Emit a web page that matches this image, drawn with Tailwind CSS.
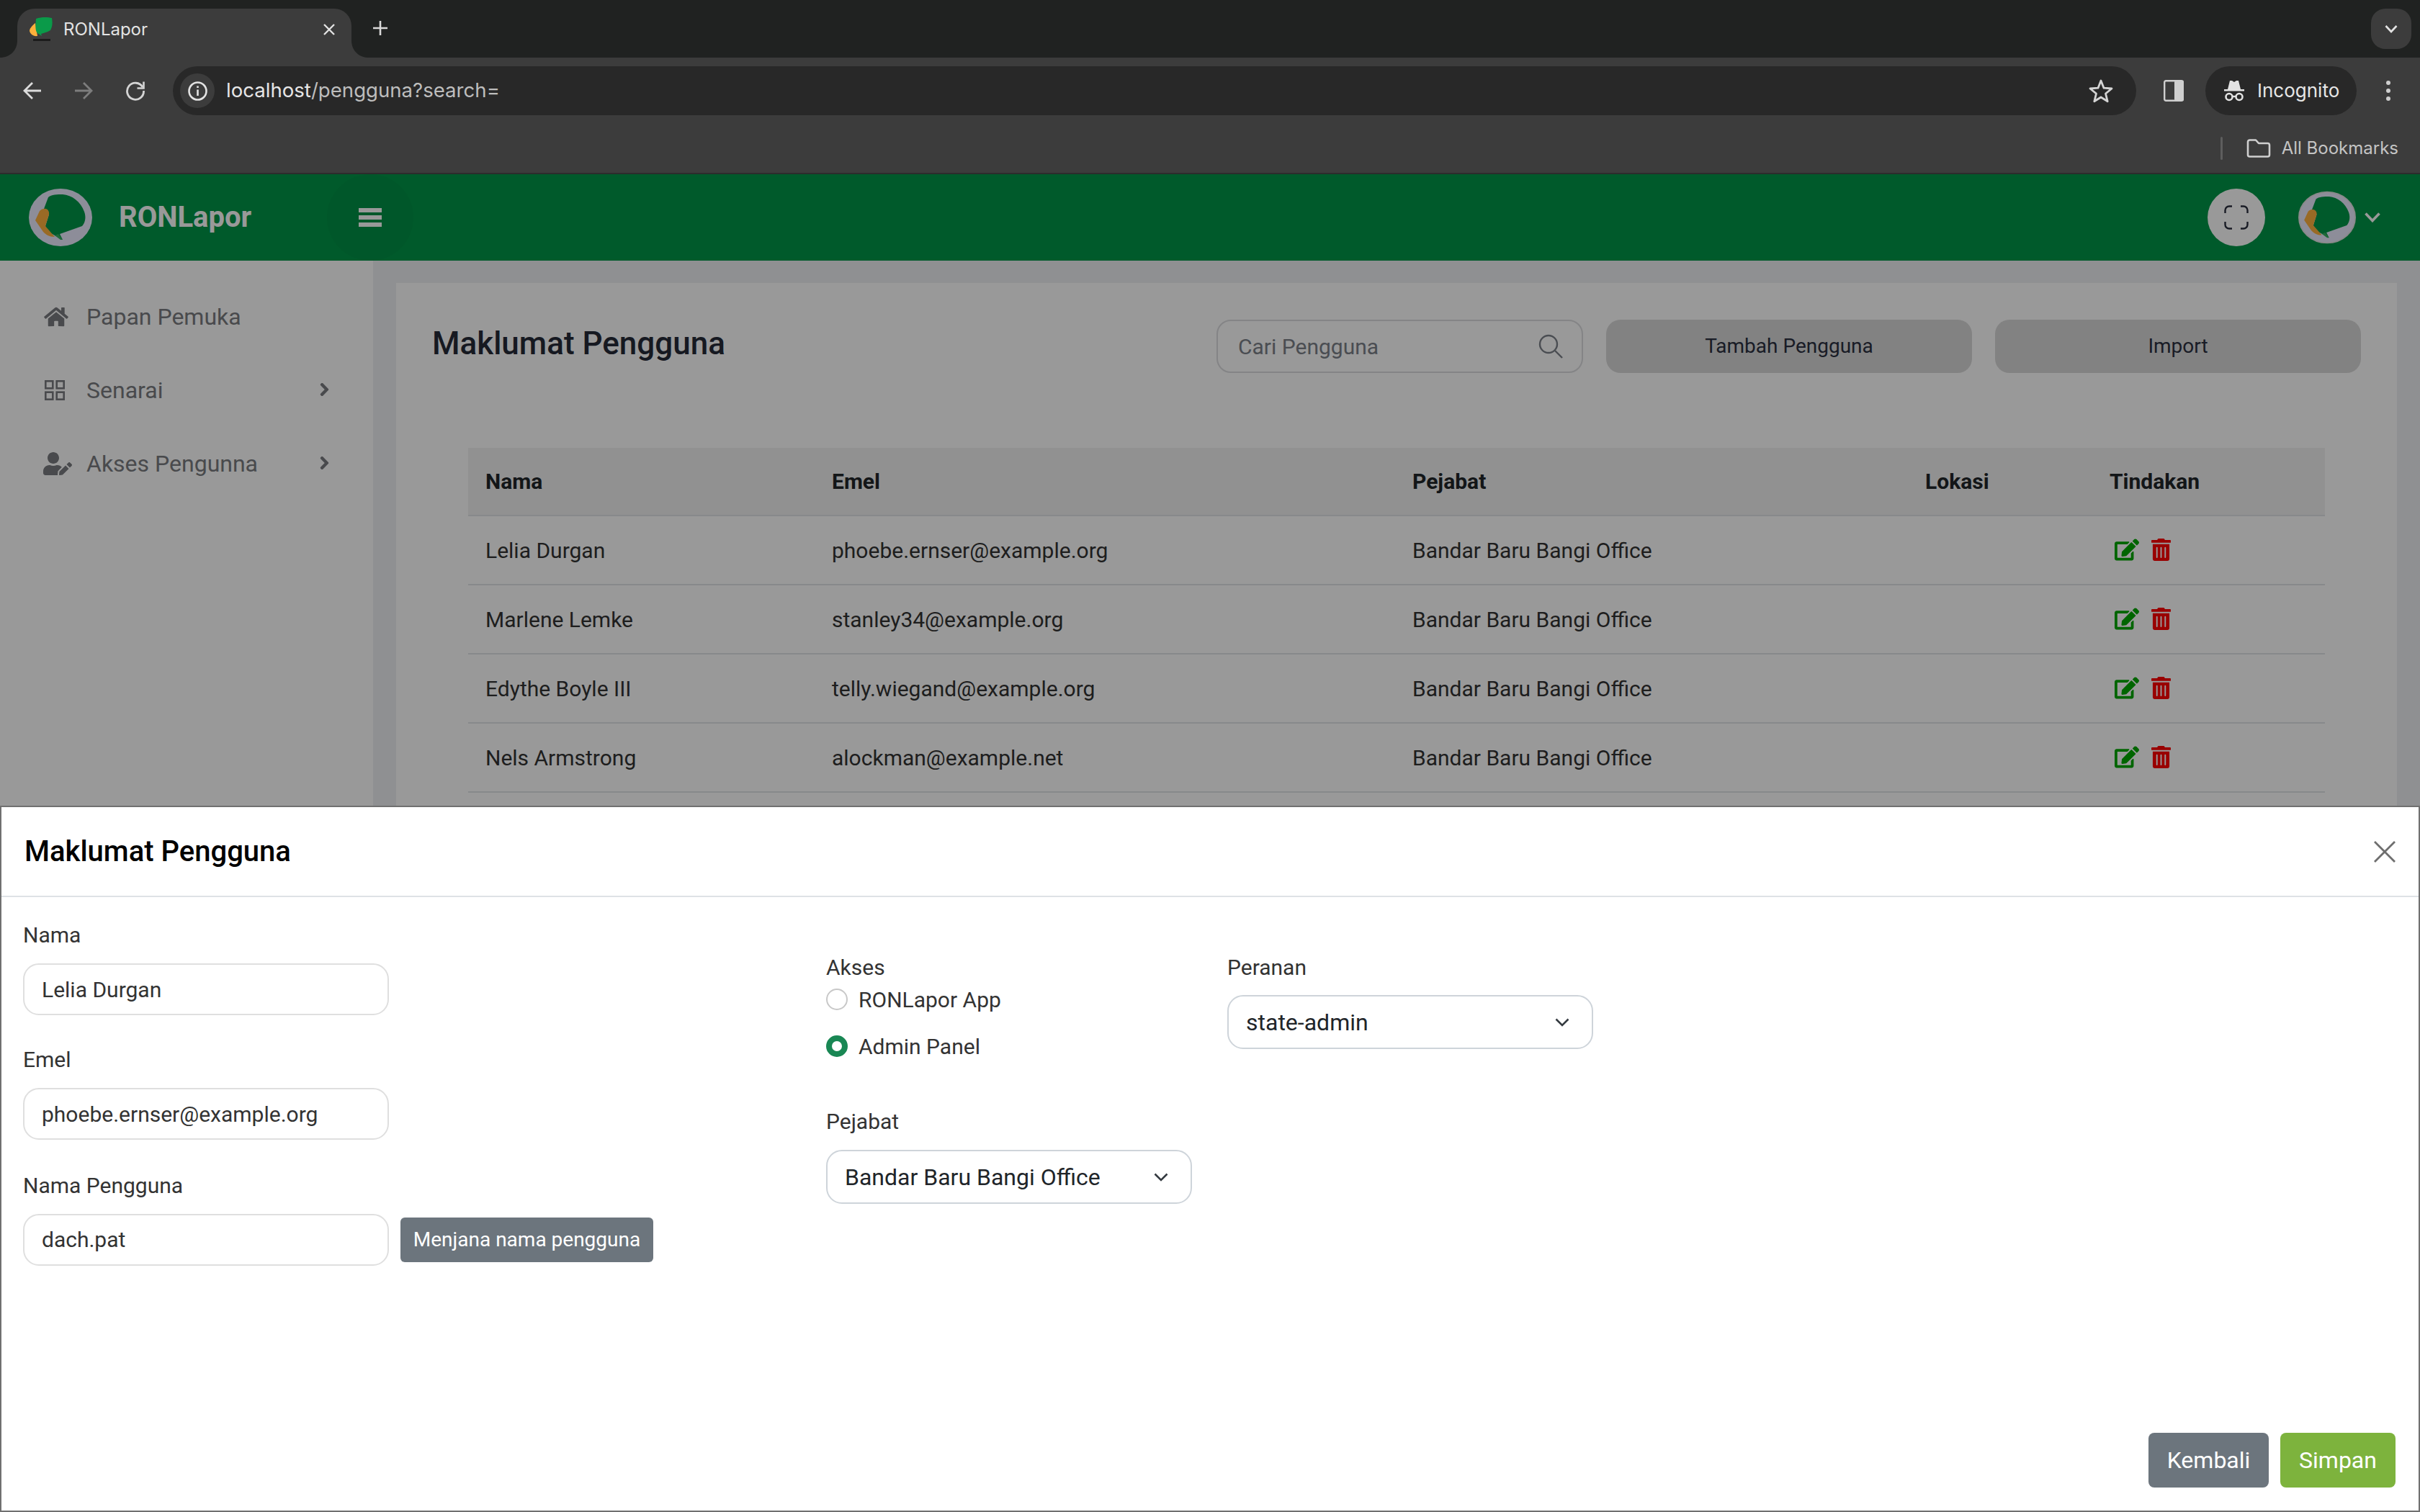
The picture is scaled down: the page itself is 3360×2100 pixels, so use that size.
<!DOCTYPE html>
<html lang="en">
<head>
  <meta charset="UTF-8" />
  <title>RONLapor</title>
  <script src="https://cdn.jsdelivr.net/npm/@tailwindcss/browser@4"></script>
</head>
<body class="m-0 bg-white">
<div class="relative flex h-[2100px] w-[3360px] flex-col overflow-hidden font-['Roboto',sans-serif]">

  <!-- browser tab strip -->
  <div class="relative flex h-[80px] shrink-0 items-end bg-[#202221] font-['Inter',sans-serif]">
    <div class="relative ml-[24px] flex h-[68px] w-[464px] items-center rounded-t-[24px] bg-[#3c3c3c] pb-[10px] pl-[16px] pr-[22px]">
      <svg class="absolute bottom-0 left-[-24px] h-[24px] w-[24px]" viewBox="0 0 24 24"><path d="M24 0V24H0C14 24 24 14 24 0Z" fill="#3c3c3c"/></svg>
      <svg class="absolute bottom-0 right-[-24px] h-[24px] w-[24px]" viewBox="0 0 24 24"><path d="M0 0V24H24C10 24 0 14 0 0Z" fill="#3c3c3c"/></svg>
      <svg class="h-[36px] w-[36px] shrink-0" viewBox="0 0 36 36">
        <path d="M9 9C4 13 1 17 1 20C2 24 6 28 12 27Z" fill="#fbb03b"/>
        <path d="M10 3C18 0 28 1 32 2C33 8 33 14 30 19C25 22 20 23 17 24L18 27L12 23C9 20 9 14 10 3Z" fill="#0a9a49"/>
        <rect x="6" y="31" width="24" height="3" fill="#1b1b1b"/>
      </svg>
      <span class="ml-[12px] text-[24px] leading-none text-[#e3e3e3]">RONLapor</span>
      <svg class="ml-auto h-[18px] w-[18px]" viewBox="0 0 18 18" fill="none" stroke="#e3e3e3" stroke-width="2.4"><path d="M2 2L16 16M16 2L2 16"/></svg>
    </div>
    <svg class="mb-[30px] ml-[29px] h-[22px] w-[22px]" viewBox="0 0 22 22" fill="none" stroke="#d8d8d8" stroke-width="2.6"><path d="M11 1V21M1 11H21"/></svg>
    <div class="ml-auto mb-[12px] mr-[12px] flex h-[56px] w-[56px] items-center justify-center rounded-[20px] bg-[#3c3c3c]">
      <svg class="h-[12px] w-[18px]" viewBox="0 0 18 12" fill="none" stroke="#e3e3e3" stroke-width="2.6"><path d="M1.5 2L9 10L16.5 2"/></svg>
    </div>
  </div>

  <!-- browser toolbar -->
  <div class="flex h-[162px] shrink-0 flex-col border-b-2 border-[#2c2c2c] bg-[#3c3c3c] font-['Inter',sans-serif]">
    <div class="mt-[12px] flex h-[68px] items-center">
      <svg class="ml-[32px] h-[26px] w-[26px]" viewBox="0 0 26 26" fill="none" stroke="#dcdcdc" stroke-width="2.8"><path d="M25 13H3M13 2L2 13L13 24"/></svg>
      <svg class="ml-[45px] h-[26px] w-[26px]" viewBox="0 0 26 26" fill="none" stroke="#7d7d7d" stroke-width="2.8"><path d="M1 13H23M13 2L24 13L13 24"/></svg>
      <svg class="ml-[45px] h-[28px] w-[28px]" viewBox="0 0 28 28" fill="none" stroke="#d4d4d4" stroke-width="2.8"><path d="M24 9A11.5 11.5 0 1 0 25.5 14"/><path d="M25.5 1.5V10.5H16.5" stroke-width="2.6"/></svg>
      <div class="ml-[38px] flex h-[68px] w-[2726px] items-center rounded-full bg-[#282828] pl-[10px] pr-[32px]">
        <div class="flex h-[48px] w-[48px] items-center justify-center rounded-full bg-[#3c3c3c]">
          <svg class="h-[27px] w-[27px]" viewBox="0 0 27 27" fill="none" stroke="#e3e3e3" stroke-width="2.6"><circle cx="13.5" cy="13.5" r="12"/><path d="M13.5 11.5V20M13.5 6.5V9"/></svg>
        </div>
        <span class="ml-[16px] text-[27.6px] leading-none text-[#e6e6e6]">localhost<span class="text-[#bdbdbd]">/pengguna?search=</span></span>
        <svg class="ml-auto h-[34px] w-[34px]" viewBox="0 0 34 34" fill="none" stroke="#d4d4d4" stroke-width="2.8"><path d="M17 3L21 13.2L32 14L23.5 21L26.2 31.8L17 26L7.8 31.8L10.5 21L2 14L13 13.2Z" stroke-linejoin="round"/></svg>
      </div>
      <svg class="ml-[38px] h-[30px] w-[28px]" viewBox="0 0 28 30"><rect x="1.2" y="1.2" width="25.6" height="27.6" rx="2" fill="none" stroke="#cfcfcf" stroke-width="2.4"/><rect x="15" y="1" width="13" height="28" rx="2" fill="#cfcfcf"/></svg>
      <div class="ml-[30px] flex h-[68px] w-[210px] items-center rounded-full bg-[#282828] pl-[25px]">
        <svg class="h-[30px] w-[30px]" viewBox="0 0 30 30" fill="#e3e3e3"><path d="M9 1H12L15 3L18 1H21L24 13H29V15.5H1V13H6Z"/><circle cx="8" cy="23.5" r="4.5" fill="none" stroke="#e3e3e3" stroke-width="2.6"/><circle cx="22" cy="23.5" r="4.5" fill="none" stroke="#e3e3e3" stroke-width="2.6"/><path d="M12.5 23H17.5" stroke="#e3e3e3" stroke-width="2.4"/></svg>
        <span class="ml-[17px] text-[26px] leading-none text-[#e6e6e6]">Incognito</span>
      </div>
      <div class="ml-[41px] flex flex-col gap-[5px]">
        <span class="h-[6px] w-[6px] rounded-full bg-[#cfcfcf]"></span>
        <span class="h-[6px] w-[6px] rounded-full bg-[#cfcfcf]"></span>
        <span class="h-[6px] w-[6px] rounded-full bg-[#cfcfcf]"></span>
      </div>
    </div>
    <div class="flex flex-1 items-center justify-end pt-[12px] pr-[30px]">
      <span class="h-[32px] w-[3px] rounded bg-[#5e5e5e]"></span>
      <svg class="ml-[33px] h-[26px] w-[34px]" viewBox="0 0 34 26" fill="none" stroke="#cfcfcf" stroke-width="2.6"><path d="M2 4A2.5 2.5 0 0 1 4.500 1.500H13L17 6H29.500A2.500 2.500 0 0 1 32 8.500V22A2.500 2.500 0 0 1 29.500 24.500H4.500A2.500 2.500 0 0 1 2 22Z" stroke-linejoin="round"/></svg>
      <span class="ml-[15px] text-[24px] leading-none text-[#c4c4c4]">All Bookmarks</span>
    </div>
  </div>

  <!-- app -->
  <div class="relative flex min-h-0 flex-1 flex-col">
    <header class="flex h-[120px] shrink-0 items-center bg-[#009648]">
      <svg class="ml-[40px] h-[80px] w-[88px]" viewBox="0 0 88 80">
        <ellipse cx="44" cy="40" rx="44" ry="40" fill="#ebebff"/>
        <path d="M27 12C31 8 40 8 47 8C60 9 72 18 77 32C80 40 78 48 74 52L43 63L47 71L38 66C30 62 25 58 23 52L28 36C28 33 25 29 21 28Z" fill="#009648"/>
        <path d="M21 28C26 27 29 32 28 36L23 52L36 67C28 67 24 64 20 60L9 44L15 31C17 29 19 28 21 28Z" fill="#ffb13f"/>
        <path d="M36 65L41 63L47 71L44 71Z" fill="#34b060"/>
      </svg>
      <span class="ml-[37px] text-[40px] font-bold leading-none text-white">RONLapor</span>
      <div class="ml-[105px] flex h-[120px] w-[120px] flex-col items-center justify-center gap-[4px] rounded-full bg-[#009246]">
        <span class="h-[6px] w-[32px] bg-white"></span>
        <span class="h-[6px] w-[32px] bg-white"></span>
        <span class="h-[6px] w-[32px] bg-white"></span>
      </div>
      <div class="ml-auto flex h-[80px] w-[80px] items-center justify-center rounded-full bg-white">
        <svg class="h-[34px] w-[34px]" viewBox="0 0 34 34" fill="none" stroke="#2b2f3f" stroke-width="2.4"><path d="M1.500 11V7A5.500 5.500 0 0 1 7 1.500H11M23 1.500H27A5.500 5.500 0 0 1 32.500 7V11M32.500 23V27A5.500 5.500 0 0 1 27 32.500H23M11 32.500H7A5.500 5.500 0 0 1 1.500 27V23"/></svg>
      </div>
      <svg class="ml-[46px] h-[80px] w-[80px]" viewBox="0 0 88 80">
        <ellipse cx="44" cy="40" rx="43" ry="39" fill="#ebebff" stroke="#e4e4e4" stroke-width="2"/>
        <path d="M27 12C31 8 40 8 47 8C60 9 72 18 77 32C80 40 78 48 74 52L43 63L47 71L38 66C30 62 25 58 23 52L28 36C28 33 25 29 21 28Z" fill="#009648"/>
        <path d="M21 28C26 27 29 32 28 36L23 52L36 67C28 67 24 64 20 60L9 44L15 31C17 29 19 28 21 28Z" fill="#ffb13f"/>
        <path d="M36 65L41 63L47 71L44 71Z" fill="#34b060"/>
      </svg>
      <svg class="ml-[12px] mr-[55px] h-[14px] w-[22px]" viewBox="0 0 22 14" fill="none" stroke="#ffffff" stroke-width="3.600"><path d="M1.500 1.500L11 11.500L20.500 1.500"/></svg>
    </header>

    <div class="flex min-h-0 flex-1">
      <!-- sidebar -->
      <aside class="w-[518px] shrink-0 bg-white pt-[27px] text-[32px] text-[#7a7c80]">
        <div class="flex h-[102px] items-center pl-[60px]">
          <svg class="h-[30px] w-[36px] fill-current" viewBox="0 0 576 512"><path d="M280.37 148.26L96 300.11V464a16 16 0 0 0 16 16l112.06-.29a16 16 0 0 0 15.92-16V368a16 16 0 0 1 16-16h64a16 16 0 0 1 16 16v95.64a16 16 0 0 0 16 16.05L464 480a16 16 0 0 0 16-16V300L295.67 148.26a12.19 12.19 0 0 0-15.3 0zM571.6 251.47L488 182.56V44.05a12 12 0 0 0-12-12h-56a12 12 0 0 0-12 12v72.61L318.47 43a48 48 0 0 0-61 0L4.34 251.47a12 12 0 0 0-1.6 16.9l25.5 31A12 12 0 0 0 45.15 301l235.22-193.74a12.19 12.19 0 0 1 15.3 0L530.9 301a12 12 0 0 0 16.9-1.6l25.5-31a12 12 0 0 0-1.7-16.93z"/></svg>
          <span class="ml-[24px]">Papan Pemuka</span>
        </div>
        <div class="flex h-[102px] items-center pl-[62px]">
          <svg class="h-[28px] w-[28px]" viewBox="0 0 28 28" fill="none" stroke="currentColor" stroke-width="2.600"><rect x="1.300" y="1.300" width="10" height="10"/><rect x="16.700" y="1.300" width="10" height="10"/><rect x="1.300" y="16.700" width="10" height="10"/><rect x="16.700" y="16.700" width="10" height="10"/></svg>
          <span class="ml-[30px]">Senarai</span>
          <svg class="ml-auto mb-[3px] mr-[61px] h-[20px] w-[13px] fill-current stroke-current stroke-[30]" viewBox="0 0 320 512"><path d="M285.476 272.971L91.132 467.314c-9.373 9.373-24.569 9.373-33.941 0l-22.667-22.667c-9.357-9.357-9.375-24.522-.04-33.901L188.505 256 34.484 101.255c-9.335-9.379-9.317-24.544.04-33.901l22.667-22.667c9.373-9.373 24.569-9.373 33.941 0L285.475 239.03c9.373 9.372 9.373 24.568.001 33.941z"/></svg>
        </div>
        <div class="flex h-[102px] items-center pl-[60px]">
          <svg class="h-[32px] w-[40px] fill-current" viewBox="0 0 640 512"><path d="M224 256c70.700 0 128-57.300 128-128S294.700 0 224 0 96 57.300 96 128s57.300 128 128 128zm89.600 32h-16.700c-22.200 10.200-46.900 16-72.900 16s-50.600-5.800-72.900-16h-16.700C60.200 288 0 348.200 0 422.400V464c0 26.500 21.500 48 48 48h274.900c-2.400-6.800-3.400-14-2.600-21.300l6.800-60.900 1.200-11.100 7.900-7.900 77.300-77.300c-24.500-27.700-60-45.500-99.900-45.500zm45.300 145.300l-6.800 61c-1.100 10.200 7.500 18.800 17.600 17.600l60.900-6.800 137.900-137.900-71.700-71.700-137.900 137.800zM633 268.900L595.100 231c-9.300-9.300-24.500-9.300-33.800 0l-37.800 37.800-4.100 4.100 71.800 71.700 41.800-41.800c9.300-9.400 9.300-24.500 0-33.900z"/></svg>
          <span class="ml-[20px]">Akses Pengunna</span>
          <svg class="ml-auto mb-[3px] mr-[61px] h-[20px] w-[13px] fill-current stroke-current stroke-[30]" viewBox="0 0 320 512"><path d="M285.476 272.971L91.132 467.314c-9.373 9.373-24.569 9.373-33.941 0l-22.667-22.667c-9.357-9.357-9.375-24.522-.04-33.901L188.505 256 34.484 101.255c-9.335-9.379-9.317-24.544.04-33.901l22.667-22.667c9.373-9.373 24.569-9.373 33.941 0L285.475 239.03c9.373 9.372 9.373 24.568.001 33.941z"/></svg>
        </div>
      </aside>

      <!-- main -->
      <main class="min-w-0 flex-1 bg-[#eff0f3] pl-[32px] pr-[32px] pt-[31px]">
        <div class="h-full bg-white pl-[50px] pr-[50px] pt-[51px]">
          <div class="flex h-[74px] items-center">
            <h1 class="pb-[8px] text-[44px] font-medium leading-none text-[#262a38]">Maklumat Pengguna</h1>
            <div class="ml-auto flex h-[74px] w-[509px] items-center rounded-[20px] border-2 border-[#dcdde0] pl-[28px] pr-[26px] text-[30px] text-[#7c8189]">
              <span>Cari Pengguna</span>
              <svg class="ml-auto h-[34px] w-[34px]" viewBox="0 0 34 34" fill="none" stroke="#7c8189" stroke-width="2.400"><circle cx="14" cy="14" r="12"/><path d="M23 23L33 33"/></svg>
            </div>
            <div class="ml-[32px] flex h-[74px] w-[508px] items-center justify-center rounded-[20px] bg-[#d9d9d9] text-[28px] text-[#2b3040]">Tambah Pengguna</div>
            <div class="ml-[32px] flex h-[74px] w-[508px] items-center justify-center rounded-[20px] bg-[#d9d9d9] text-[28px] text-[#2b3040]">Import</div>
          </div>

          <table class="ml-[50px] mt-[104px] w-[2578px] table-fixed border-collapse text-[30px] text-[#333333]">
            <thead>
              <tr class="h-[94px] border-b-2 border-[#e2e5e8] bg-[#f2f2f2] text-left text-[#212529]">
                <th class="w-[481px] pl-[24px] font-bold">Nama</th>
                <th class="w-[806px] pl-[24px] font-bold">Emel</th>
                <th class="w-[712px] pl-[24px] font-bold">Pejabat</th>
                <th class="w-[256px] pl-[24px] font-bold">Lokasi</th>
                <th class="w-[323px] pl-[24px] font-bold">Tindakan</th>
              </tr>
            </thead>
            <tbody>
              <tr class="h-[96px] border-b-2 border-[#e2e5e8]">
                <td class="pl-[24px]">Lelia Durgan</td>
                <td class="pl-[24px]">phoebe.ernser@example.org</td>
                <td class="pl-[24px]">Bandar Baru Bangi Office</td>
                <td></td>
                <td class="pl-[31px]"><div class="flex items-center gap-[17px] pb-[2px]">
                  <svg class="h-[31px] w-[34px] fill-[#00a800]" viewBox="0 0 576 512"><path d="M402.600 83.200l90.200 90.200c3.800 3.800 3.800 10 0 13.800L274.400 405.600l-92.800 10.300c-12.400 1.400-22.900-9.100-21.500-21.500l10.300-92.800L388.800 83.200c3.800-3.800 10-3.800 13.800 0zm162-22.900l-48.800-48.800c-15.200-15.200-39.900-15.200-55.200 0l-35.400 35.400c-3.800 3.800-3.800 10 0 13.800l90.200 90.200c3.800 3.800 10 3.800 13.800 0l35.400-35.400c15.200-15.300 15.200-40 0-55.200zM384 346.200V448H64V128h229.800c3.200 0 6.200-1.300 8.500-3.500l40-40c7.600-7.600 2.200-20.500-8.500-20.500H48C21.500 64 0 85.500 0 112v352c0 26.500 21.500 48 48 48h352c26.500 0 48-21.500 48-48V306.200c0-10.700-12.900-16-20.500-8.500l-40 40c-2.200 2.300-3.500 5.300-3.500 8.500z"/></svg>
                  <svg class="h-[31px] w-[27px] fill-[#ff0000]" viewBox="0 0 448 512"><path d="M32 464a48 48 0 0 0 48 48h288a48 48 0 0 0 48-48V128H32zm272-256a16 16 0 0 1 32 0v224a16 16 0 0 1-32 0zm-96 0a16 16 0 0 1 32 0v224a16 16 0 0 1-32 0zm-96 0a16 16 0 0 1 32 0v224a16 16 0 0 1-32 0zM432 32H312l-9.400-18.700A24 24 0 0 0 281.100 0H166.800a23.720 23.720 0 0 0-21.400 13.300L136 32H16A16 16 0 0 0 0 48v32a16 16 0 0 0 16 16h416a16 16 0 0 0 16-16V48a16 16 0 0 0-16-16z"/></svg>
                </div></td>
              </tr>
              <tr class="h-[96px] border-b-2 border-[#e2e5e8]">
                <td class="pl-[24px]">Marlene Lemke</td>
                <td class="pl-[24px]">stanley34@example.org</td>
                <td class="pl-[24px]">Bandar Baru Bangi Office</td>
                <td></td>
                <td class="pl-[31px]"><div class="flex items-center gap-[17px] pb-[2px]">
                  <svg class="h-[31px] w-[34px] fill-[#00a800]" viewBox="0 0 576 512"><path d="M402.600 83.200l90.200 90.200c3.800 3.800 3.800 10 0 13.800L274.400 405.600l-92.800 10.300c-12.400 1.400-22.900-9.100-21.500-21.500l10.300-92.800L388.800 83.200c3.800-3.800 10-3.800 13.800 0zm162-22.900l-48.800-48.800c-15.200-15.200-39.900-15.200-55.200 0l-35.400 35.400c-3.800 3.800-3.800 10 0 13.800l90.200 90.200c3.800 3.800 10 3.800 13.800 0l35.400-35.400c15.200-15.300 15.200-40 0-55.200zM384 346.200V448H64V128h229.800c3.200 0 6.200-1.300 8.500-3.500l40-40c7.600-7.600 2.200-20.500-8.500-20.500H48C21.500 64 0 85.500 0 112v352c0 26.500 21.500 48 48 48h352c26.500 0 48-21.500 48-48V306.200c0-10.700-12.900-16-20.500-8.500l-40 40c-2.200 2.300-3.500 5.300-3.500 8.500z"/></svg>
                  <svg class="h-[31px] w-[27px] fill-[#ff0000]" viewBox="0 0 448 512"><path d="M32 464a48 48 0 0 0 48 48h288a48 48 0 0 0 48-48V128H32zm272-256a16 16 0 0 1 32 0v224a16 16 0 0 1-32 0zm-96 0a16 16 0 0 1 32 0v224a16 16 0 0 1-32 0zm-96 0a16 16 0 0 1 32 0v224a16 16 0 0 1-32 0zM432 32H312l-9.400-18.700A24 24 0 0 0 281.100 0H166.800a23.720 23.720 0 0 0-21.400 13.300L136 32H16A16 16 0 0 0 0 48v32a16 16 0 0 0 16 16h416a16 16 0 0 0 16-16V48a16 16 0 0 0-16-16z"/></svg>
                </div></td>
              </tr>
              <tr class="h-[96px] border-b-2 border-[#e2e5e8]">
                <td class="pl-[24px]">Edythe Boyle III</td>
                <td class="pl-[24px]">telly.wiegand@example.org</td>
                <td class="pl-[24px]">Bandar Baru Bangi Office</td>
                <td></td>
                <td class="pl-[31px]"><div class="flex items-center gap-[17px] pb-[2px]">
                  <svg class="h-[31px] w-[34px] fill-[#00a800]" viewBox="0 0 576 512"><path d="M402.600 83.200l90.200 90.200c3.800 3.800 3.800 10 0 13.800L274.400 405.600l-92.800 10.300c-12.400 1.400-22.900-9.100-21.500-21.500l10.300-92.800L388.800 83.200c3.800-3.800 10-3.800 13.800 0zm162-22.900l-48.800-48.800c-15.200-15.200-39.900-15.200-55.200 0l-35.400 35.400c-3.800 3.800-3.800 10 0 13.800l90.200 90.200c3.800 3.800 10 3.800 13.800 0l35.400-35.400c15.200-15.300 15.200-40 0-55.200zM384 346.200V448H64V128h229.800c3.200 0 6.200-1.300 8.500-3.500l40-40c7.600-7.600 2.200-20.500-8.500-20.500H48C21.500 64 0 85.500 0 112v352c0 26.500 21.500 48 48 48h352c26.500 0 48-21.500 48-48V306.200c0-10.700-12.900-16-20.500-8.500l-40 40c-2.200 2.300-3.500 5.300-3.500 8.500z"/></svg>
                  <svg class="h-[31px] w-[27px] fill-[#ff0000]" viewBox="0 0 448 512"><path d="M32 464a48 48 0 0 0 48 48h288a48 48 0 0 0 48-48V128H32zm272-256a16 16 0 0 1 32 0v224a16 16 0 0 1-32 0zm-96 0a16 16 0 0 1 32 0v224a16 16 0 0 1-32 0zm-96 0a16 16 0 0 1 32 0v224a16 16 0 0 1-32 0zM432 32H312l-9.400-18.700A24 24 0 0 0 281.100 0H166.800a23.720 23.720 0 0 0-21.400 13.300L136 32H16A16 16 0 0 0 0 48v32a16 16 0 0 0 16 16h416a16 16 0 0 0 16-16V48a16 16 0 0 0-16-16z"/></svg>
                </div></td>
              </tr>
              <tr class="h-[96px] border-b-2 border-[#e2e5e8]">
                <td class="pl-[24px]">Nels Armstrong</td>
                <td class="pl-[24px]">alockman@example.net</td>
                <td class="pl-[24px]">Bandar Baru Bangi Office</td>
                <td></td>
                <td class="pl-[31px]"><div class="flex items-center gap-[17px] pb-[2px]">
                  <svg class="h-[31px] w-[34px] fill-[#00a800]" viewBox="0 0 576 512"><path d="M402.600 83.200l90.200 90.200c3.800 3.800 3.800 10 0 13.800L274.400 405.600l-92.800 10.300c-12.400 1.400-22.900-9.100-21.500-21.500l10.300-92.800L388.800 83.200c3.800-3.800 10-3.800 13.800 0zm162-22.900l-48.800-48.800c-15.200-15.200-39.900-15.200-55.200 0l-35.400 35.400c-3.800 3.800-3.800 10 0 13.800l90.200 90.200c3.800 3.800 10 3.800 13.800 0l35.400-35.400c15.200-15.300 15.200-40 0-55.200zM384 346.200V448H64V128h229.800c3.200 0 6.200-1.300 8.500-3.500l40-40c7.600-7.600 2.200-20.500-8.500-20.500H48C21.500 64 0 85.500 0 112v352c0 26.500 21.500 48 48 48h352c26.500 0 48-21.500 48-48V306.200c0-10.700-12.900-16-20.500-8.500l-40 40c-2.200 2.300-3.500 5.300-3.500 8.500z"/></svg>
                  <svg class="h-[31px] w-[27px] fill-[#ff0000]" viewBox="0 0 448 512"><path d="M32 464a48 48 0 0 0 48 48h288a48 48 0 0 0 48-48V128H32zm272-256a16 16 0 0 1 32 0v224a16 16 0 0 1-32 0zm-96 0a16 16 0 0 1 32 0v224a16 16 0 0 1-32 0zm-96 0a16 16 0 0 1 32 0v224a16 16 0 0 1-32 0zM432 32H312l-9.400-18.700A24 24 0 0 0 281.100 0H166.800a23.720 23.720 0 0 0-21.400 13.300L136 32H16A16 16 0 0 0 0 48v32a16 16 0 0 0 16 16h416a16 16 0 0 0 16-16V48a16 16 0 0 0-16-16z"/></svg>
                </div></td>
              </tr>
            </tbody>
          </table>
        </div>
      </main>
    </div>

    <!-- backdrop -->
    <div class="absolute inset-0 bg-black/40"></div>

    <!-- bottom offcanvas -->
    <div class="absolute bottom-0 left-0 right-0 flex h-[981px] flex-col border-2 border-[#707070] bg-white">
      <div class="flex h-[125px] shrink-0 items-center border-b-2 border-[#dee2e6] pl-[32px] pr-[32px]">
        <h2 class="text-[40px] font-medium leading-none text-black">Maklumat Pengguna</h2>
        <svg class="ml-auto h-[30px] w-[30px]" viewBox="0 0 30 30" fill="none" stroke="#6e6e6e" stroke-width="2.800"><path d="M1 1L29 29M29 1L1 29"/></svg>
      </div>
      <div class="relative flex-1 pl-[30px] text-[30px] text-[#333333]">
        <div class="flex">
          <!-- identity column -->
          <div class="w-[1115px] shrink-0 pt-[34px]">
            <label class="block h-[38px] leading-[38px]">Nama</label>
            <div class="mt-[20px] flex h-[72px] w-[508px] items-center rounded-[22px] border-2 border-[#dfdfdf] pl-[24px]">Lelia Durgan</div>
            <label class="mt-[43px] block h-[38px] leading-[38px]">Emel</label>
            <div class="mt-[20px] flex h-[72px] w-[508px] items-center rounded-[22px] border-2 border-[#dfdfdf] pl-[24px]">phoebe.ernser@example.org</div>
            <label class="mt-[45px] block h-[38px] leading-[38px]">Nama Pengguna</label>
            <div class="mt-[20px] flex items-center">
              <div class="flex h-[72px] w-[508px] items-center rounded-[22px] border-2 border-[#dfdfdf] pb-[2px] pl-[24px]">dach.pat</div>
              <button class="ml-[16px] h-[62px] w-[351px] rounded-[6px] bg-[#6c757d] text-[28px] text-white">Menjana nama pengguna</button>
            </div>
          </div>
          <!-- access column -->
          <div class="w-[557px] shrink-0 pt-[79px]">
            <label class="block h-[38px] leading-[38px]">Akses</label>
            <div class="mt-[10px] flex h-[30px] items-center">
              <span class="h-[30px] w-[30px] rounded-full border-2 border-[#c8c8c8]"></span>
              <span class="ml-[15px]">RONLapor App</span>
            </div>
            <div class="mt-[35px] flex h-[30px] items-center">
              <span class="h-[30px] w-[30px] rounded-full border-[8px] border-[#198754] bg-white"></span>
              <span class="ml-[15px]">Admin Panel</span>
            </div>
            <label class="mt-[71px] block h-[38px] leading-[38px]">Pejabat</label>
            <div class="mt-[20px] flex h-[75px] w-[508px] items-center rounded-[22px] border-2 border-[#ced4da] pl-[24px] pr-[31px] text-[32px] text-[#212529]">
              <span>Bandar Baru Bangi Office</span>
              <svg class="ml-auto h-[12px] w-[20px]" viewBox="0 0 20 12" fill="none" stroke="#343a40" stroke-width="2.600"><path d="M1.500 1.500L10 10L18.500 1.500"/></svg>
            </div>
          </div>
          <!-- role column -->
          <div class="w-[507px] shrink-0 pt-[79px]">
            <label class="block h-[38px] leading-[38px]">Peranan</label>
            <div class="mt-[19px] flex h-[75px] w-[508px] items-center rounded-[22px] border-2 border-[#ced4da] pl-[24px] pr-[31px] text-[32px] text-[#212529]">
              <span>state-admin</span>
              <svg class="ml-auto h-[12px] w-[20px]" viewBox="0 0 20 12" fill="none" stroke="#343a40" stroke-width="2.600"><path d="M1.500 1.500L10 10L18.500 1.500"/></svg>
            </div>
          </div>
        </div>
        <div class="absolute bottom-[32px] right-[32px] flex gap-[16px] text-[32px] text-white">
          <button class="h-[76px] w-[167px] rounded-[8px] bg-[#6c757d]">Kembali</button>
          <button class="h-[76px] w-[160px] rounded-[8px] bg-[#7db33d]">Simpan</button>
        </div>
      </div>
    </div>
  </div>
</div>
</body>
</html>
